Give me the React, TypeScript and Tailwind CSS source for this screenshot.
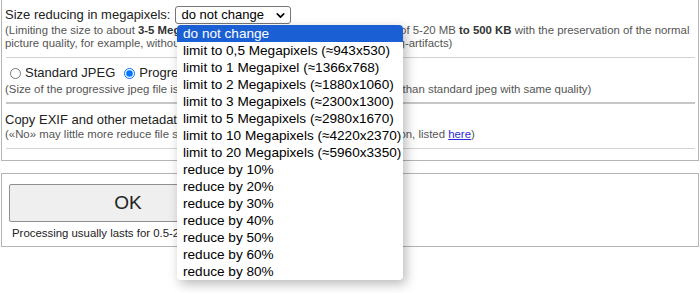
import { ChevronDown } from "lucide-react";

const sizeOptions = [
  "do not change",
  "limit to 0,5 Megapixels (≈943x530)",
  "limit to 1 Megapixel (≈1366x768)",
  "limit to 2 Megapixels (≈1880x1060)",
  "limit to 3 Megapixels (≈2300x1300)",
  "limit to 5 Megapixels (≈2980x1670)",
  "limit to 10 Megapixels (≈4220x2370)",
  "limit to 20 Megapixels (≈5960x3350)",
  "reduce by 10%",
  "reduce by 20%",
  "reduce by 30%",
  "reduce by 40%",
  "reduce by 50%",
  "reduce by 60%",
  "reduce by 80%",
];

function Radio({ checked }: { checked?: boolean }) {
  return (
    <svg width="11" height="11" viewBox="0 0 11 11" className="shrink-0">
      {checked ? (
        <>
          <circle cx="5.5" cy="5.5" r="5" fill="#fff" stroke="#0075ff" strokeWidth="1" />
          <circle cx="5.5" cy="5.5" r="3.3" fill="#0075ff" />
        </>
      ) : (
        <circle cx="5.5" cy="5.5" r="5" fill="#fff" stroke="#767676" strokeWidth="1" />
      )}
    </svg>
  );
}

export default function App() {
  return (
    <div className="relative h-[293px] w-[700px] overflow-hidden bg-white font-['Liberation_Sans',Arial,sans-serif] text-[#222]">
      {/* settings box, top edge scrolled off */}
      <div className="mx-px border-x border-b border-[#b4b4b4] px-[3px] pb-[11px] pt-[6px]">
        <div className="flex h-[18px] items-center text-[13px]">
          <span>Size reducing in megapixels:</span>
          <span className="ml-[5px] inline-flex h-[18px] w-[116px] items-center justify-between rounded-[3px] border border-[#767676] pl-[5px] pr-[3px] text-[13px] text-black">
            do not change
            <ChevronDown size={13} strokeWidth={3} />
          </span>
        </div>
        <p className="text-[11.4px] leading-[13px] text-[#555]">
          (Limiting the size to about <b className="text-[#333]">3-5 Megapixels</b> allows to reduce the size of photos of 5-20 MB{" "}
          <b className="text-[#333]">to 500 KB</b> with the preservation of the normal picture quality, for example, without a loss of
          sharpness and without visible jpeg-artifacts)
        </p>
        <div className="ml-px mt-[7px] h-px bg-[#d2d2d2]" />

        <div className="mt-[7px] flex h-4 items-center text-[13px]">
          <span className="ml-[5px]">
            <Radio />
          </span>
          <span className="ml-[4px]">Standard JPEG</span>
          <span className="ml-[9px]">
            <Radio checked />
          </span>
          <span className="ml-[4px]">Progressive JPEG</span>
        </div>
        <p className="mt-[2px] text-[11.4px] leading-[13px] text-[#555]">
          (Size of the progressive jpeg file is usually on average by 5-10 percent smaller than standard jpeg with same quality)
        </p>
        <div className="ml-px mt-[6px] h-[2px] bg-[#c6c6c6]" />

        <div className="mt-[8px] flex h-4 items-center text-[13px]">
          <span>Copy EXIF and other metadata:</span>
          <span className="ml-[6px]">
            <Radio />
          </span>
          <span className="ml-[4px]">Yes</span>
          <span className="ml-[9px]">
            <Radio checked />
          </span>
          <span className="ml-[4px]">No</span>
        </div>
        <p className="text-[11.4px] leading-[13px] text-[#555]">
          («No» may little more reduce file size, but you will lose any additional information, listed{" "}
          <span className="text-[#2b2bd6] underline">here</span>)
        </p>
        <div className="ml-px mt-[7px] h-px bg-[#d2d2d2]" />
      </div>

      {/* submit box */}
      <div className="mx-px mt-[12px] border border-[#b4b4b4] px-[7px] pb-[6px] pt-[10px]">
        <div className="flex h-[38px] w-[238px] items-center justify-center rounded-[2px] border border-[#8f8f8f] bg-[#efefef] text-[19px]">
          OK
        </div>
        <p className="ml-[3px] mt-1 text-[11.4px] leading-[14px]">Processing usually lasts for 0.5-2 minutes</p>
      </div>

      {/* open select popup */}
      <ul className="absolute left-[177px] top-[25px] w-[226px] overflow-hidden rounded-[4px] bg-white shadow-[3px_4px_12px_rgba(0,0,0,0.28)]">
        {sizeOptions.map((opt, i) => (
          <li
            key={opt}
            className={
              i === 0
                ? "h-[17px] whitespace-nowrap bg-[#1a5fd4] pl-[6px] text-[13.6px] leading-[17px] text-white"
                : "h-[17px] whitespace-nowrap pl-[6px] text-[13.6px] leading-[17px] text-black"
            }
          >
            {opt}
          </li>
        ))}
      </ul>
    </div>
  );
}
